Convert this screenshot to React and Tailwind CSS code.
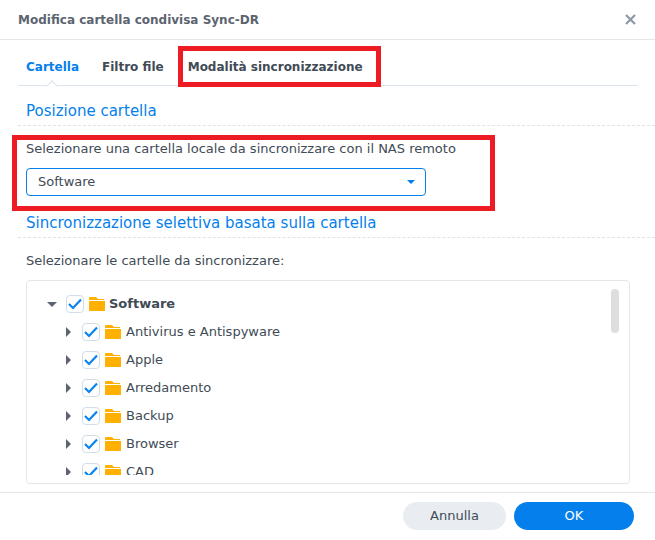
import React from 'react';

const folders = ['Antivirus e Antispyware', 'Apple', 'Arredamento', 'Backup', 'Browser', 'CAD'];

function Check() {
  return (
    <span className="w-[18px] h-[18px] shrink-0 rounded-[4px] border border-[#d3dde8] bg-white flex items-center justify-center">
      <svg width="14" height="12" viewBox="0 0 14 12">
        <path d="M1 6 L5 10 L13 1.5" fill="none" stroke="#0a84ee" strokeWidth="2.2" />
      </svg>
    </span>
  );
}

function Folder() {
  return (
    <svg width="16" height="14" viewBox="0 0 16 14" className="shrink-0 block">
      <path d="M0 1 Q0 0 1 0 L7 0 L9 2 L15 2 L15 3 L0 3 Z" fill="#ffb000" />
      <path d="M0 4 L16 4 L16 14 L0 14 Z" fill="#ffb000" />
    </svg>
  );
}

function SectionTitle({ children }) {
  return (
    <div className="h-[26px] border-b border-dashed border-[#dde3ea] pl-2 text-[15px] leading-[22px] text-[#057feb]">
      {children}
    </div>
  );
}

export default function App() {
  return (
    <div className="relative w-[655px] h-[540px] bg-white overflow-hidden font-['DejaVu_Sans',sans-serif] text-[13px] text-[#414b55]">
      <div className="h-10 border-b border-[#e3e7ec] flex items-center justify-between pl-[18px] pr-[19px]">
        <span className="font-bold text-[12px] text-[#5c6470]">Modifica cartella condivisa Sync-DR</span>
        <svg width="11" height="11" viewBox="0 0 11 11">
          <path d="M1 1 L10 10 M10 1 L1 10" stroke="#8f98a5" strokeWidth="2.2" />
        </svg>
      </div>

      <div className="ml-[18px] mr-[17px] h-[46px] border-b border-[#dbe3ec] flex items-center gap-[23px] pl-2 pt-[8px] font-bold text-[12px] relative">
        <span className="text-[#057feb]">Cartella</span>
        <span>Filtro file</span>
        <span className="ml-[1px]">Modalità sincronizzazione</span>
        <span className="absolute left-[30px] -bottom-[5px] w-[8px] h-[8px] rotate-45 bg-white border-l border-t border-[#dbe3ec]" />
      </div>

      <div className="ml-[18px] pt-[14px]">
        <SectionTitle>Posizione cartella</SectionTitle>
      </div>

      <div className="pl-[26px] pt-[14px]">
        <div className="leading-[17px]">Selezionare una cartella locale da sincronizzare con il NAS remoto</div>
        <div className="mt-[11px] w-[400px] h-[28px] rounded-[4px] border border-[#057feb] flex items-center justify-between pl-[11px] pr-[10px]">
          <span>Software</span>
          <span className="w-0 h-0 border-x-[4px] border-x-transparent border-t-[4px] border-t-[#057feb]" />
        </div>
      </div>

      <div className="ml-[18px] pt-[16px]">
        <SectionTitle>Sincronizzazione selettiva basata sulla cartella</SectionTitle>
      </div>

      <div className="pl-[26px] pt-[14px] leading-[17px]">Selezionare le cartelle da sincronizzare:</div>

      <div className="relative ml-[26px] mt-[11px] w-[604px] h-[204px] rounded-[4px] border border-[#e3e7ec] overflow-hidden">
        <div className="h-[194px] overflow-hidden pt-[9px]">
          <div className="h-[28px] flex items-center pl-[20px]">
            <span className="w-0 h-0 mr-[9px] border-x-[5px] border-x-transparent border-t-[5px] border-t-[#5c6470]" />
            <Check />
            <span className="ml-[5px]"><Folder /></span>
            <span className="ml-[4px] font-bold">Software</span>
          </div>
          {folders.map((name) => (
            <div key={name} className="h-[28px] flex items-center pl-[39px]">
              <span className="w-0 h-0 mr-[11px] border-y-[5px] border-y-transparent border-l-[5px] border-l-[#5c6470]" />
              <Check />
              <span className="ml-[5px]"><Folder /></span>
              <span className="ml-[5px]">{name}</span>
            </div>
          ))}
        </div>
        <div className="absolute right-[10px] top-[8px] w-2 h-[44px] rounded-full bg-[#dedede]" />
      </div>

      <div className="mt-[8px] h-12 border-t border-[#e3e7ec] flex justify-end gap-2 pr-[21px] pt-[9px]">
        <button className="w-[103px] h-[28px] rounded-full bg-[#e9edf2] text-[#414b55]">Annulla</button>
        <button className="w-[120px] h-[28px] rounded-full bg-[#057feb] text-white">OK</button>
      </div>

      <div className="absolute left-[178px] top-[46px] w-[203px] h-[41px] border-[5px] border-[#ed1c24]" />
      <div className="absolute left-[12px] top-[135px] w-[483px] h-[76px] border-[5px] border-[#ed1c24]" />
    </div>
  );
}
